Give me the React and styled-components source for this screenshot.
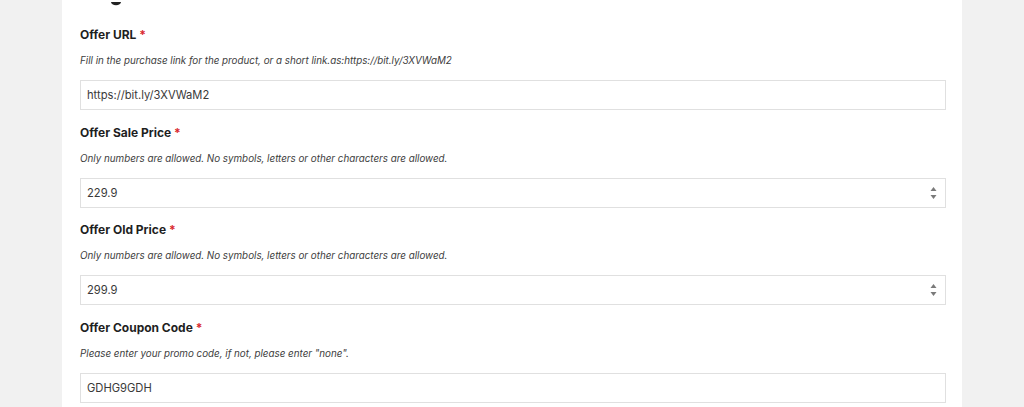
import React from 'react'
import styled, { createGlobalStyle } from 'styled-components'

const Global = createGlobalStyle`
  html, body {
    margin: 0;
    padding: 0;
    background: #f1f1f1;
    font-family: "Inter", "Noto Sans", sans-serif;
  }
`

const fields = [
  {
    label: 'Offer URL',
    hint: 'Fill in the purchase link for the product, or a short link.as:https://bit.ly/3XVWaM2',
    value: 'https://bit.ly/3XVWaM2',
  },
  {
    label: 'Offer Sale Price',
    hint: 'Only numbers are allowed. No symbols, letters or other characters are allowed.',
    value: '229.9',
    number: true,
  },
  {
    label: 'Offer Old Price',
    hint: 'Only numbers are allowed. No symbols, letters or other characters are allowed.',
    value: '299.9',
    number: true,
  },
  {
    label: 'Offer Coupon Code',
    hint: 'Please enter your promo code, if not, please enter "none".',
    value: 'GDHG9GDH',
  },
]

function App() {
  return (
    <>
      <Global />
      <Page>
        <Panel>
          <TopIcon>
            <svg width="12" height="4" viewBox="0 0 12 4">
              <ellipse cx="6" cy="0" rx="5" ry="3.2" fill="#222" />
            </svg>
          </TopIcon>
          {fields.map((f) => (
            <Field key={f.label}>
              <Label>
                {f.label} <Req>*</Req>
              </Label>
              <Hint>{f.hint}</Hint>
              <InputWrap>
                <Input type="text" readOnly value={f.value} />
                {f.number && (
                  <Spinner>
                    <svg width="7" height="14" viewBox="0 0 7 14">
                      <path d="M3.5 1 L6.5 5 L0.5 5 Z" fill="#7a7a7a" />
                      <path d="M0.5 9 L6.5 9 L3.5 13 Z" fill="#7a7a7a" />
                    </svg>
                  </Spinner>
                )}
              </InputWrap>
            </Field>
          ))}
        </Panel>
      </Page>
    </>
  )
}

export default App

const Page = styled.div`
  width: 1024px;
  height: 407px;
  overflow: hidden;
  background: #f1f1f1;
`
const Panel = styled.div`
  margin-left: 62px;
  width: 900px;
  height: 407px;
  background: #ffffff;
  padding: 0 16px 0 18px;
  box-sizing: border-box;
`
const TopIcon = styled.div`
  height: 26px;
  padding-left: 30px;
  line-height: 0;
`
const Field = styled.div`
  display: flex;
  flex-direction: column;
  margin-bottom: 13.6px;
`
const Label = styled.div`
  font-size: 12px;
  font-weight: 700;
  line-height: 18px;
  color: #1f1f1f;
`
const Req = styled.span`
  color: #d9272e;
`
const Hint = styled.div`
  margin-top: 8px;
  font-size: 9.8px;
  font-style: italic;
  line-height: 18px;
  color: #3d3d3d;
`
const InputWrap = styled.div`
  position: relative;
  margin-top: 10px;
`
const Input = styled.input`
  display: block;
  width: 100%;
  height: 30px;
  box-sizing: border-box;
  border: 1px solid #e0e0e0;
  border-radius: 0;
  padding: 0 6px;
  font-family: "Inter", "Noto Sans", sans-serif;
  font-size: 11.2px;
  color: #3a3a3a;
  background: #fff;
  outline: none;
`
const Spinner = styled.div`
  position: absolute;
  right: 9px;
  top: 8px;
  line-height: 0;
`
